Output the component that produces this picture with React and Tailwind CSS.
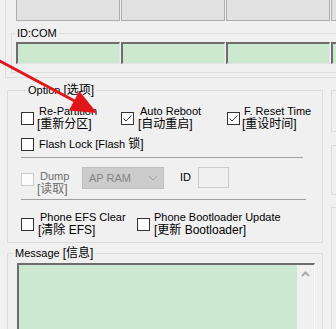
import React from 'react';

const Check = ({ checked = false, disabled = false }) => (
  <span
    className={`flex h-[13px] w-[13px] shrink-0 items-center justify-center border ${
      disabled ? 'border-[#cccccc] bg-[#fcfcfc]' : 'border-[#333333] bg-white'
    }`}
  >
    {checked && (
      <svg width="11" height="11" viewBox="0 0 11 11">
        <path d="M1.5 5.5 L4 8 L9.5 2.5" fill="none" stroke="#333333" strokeWidth="1" />
      </svg>
    )}
  </span>
);

// two-line checkbox caption: english on top, chinese below
const Caption = ({ top, bottom, gray = false, pad = 'pl-[2px]' }) => (
  <div className={`flex flex-col leading-[13px] ${gray ? 'text-[#6d6d6d]' : 'text-black'}`}>
    <span className={`whitespace-nowrap text-[11px] ${pad}`}>{top}</span>
    <span className="whitespace-nowrap text-[12px]">{bottom}</span>
  </div>
);

const Legend = ({ children, ml = 'ml-[5px]' }) => (
  <legend className={`${ml} px-[2px] text-[11px] leading-[13px] whitespace-nowrap`}>{children}</legend>
);

export default function App() {
  return (
    <div className="relative h-[329px] w-[336px] overflow-hidden bg-[#f0f0f0] font-['Liberation_Sans','Noto_Sans_CJK_SC',sans-serif] text-black">
      {/* top frame: buttons + ID:COM */}
      <div className="ml-[5px] w-[420px] border-b border-l border-[#dcdcdc] pb-[4px]">
        <div className="-mt-[2px] flex gap-[1px] pl-[10px]">
          {[0, 1, 2, 3].map((i) => (
            <div key={i} className="h-[23px] w-[104px] shrink-0 border border-[#adadad] bg-[#e1e1e1]" />
          ))}
        </div>
        <fieldset className="ml-[5px] mt-[6px] border border-[#dcdcdc] pb-[8px]">
          <Legend ml="ml-[3px]">ID:COM</Legend>
          <div className="mt-[2px] flex gap-[1px] pl-[4px]">
            {[0, 1, 2, 3].map((i) => (
              <div
                key={i}
                className="h-[22px] w-[104px] shrink-0 border-b border-l-2 border-r border-t-2 border-b-[#e3e3e3] border-l-[#6d6d6d] border-r-[#e3e3e3] border-t-[#6d6d6d] bg-[#cce8cf]"
              />
            ))}
          </div>
        </fieldset>
      </div>

      <div className="flex">
        <div className="ml-[7px] flex w-[316px] shrink-0 flex-col">
          {/* Option */}
          <fieldset className="mt-[6px] border border-[#dcdcdc] pb-[5px] pl-[13px]">
            <Legend>
              Option <span className="text-[12px]">[选项]</span>
            </Legend>

            <div className="mt-[8px] flex items-center">
              <div className="flex w-[100px] items-center gap-[3px]">
                <Check />
                <Caption top="Re-Partition" bottom="[重新分区]" />
              </div>
              <div className="flex w-[106px] items-center gap-[4px]">
                <Check checked />
                <Caption top="Auto Reboot" bottom="[自动重启]" />
              </div>
              <div className="flex items-center gap-[2px]">
                <Check checked />
                <Caption top="F. Reset Time" bottom="[重设时间]" />
              </div>
            </div>

            <div className="mt-[7px] flex h-[13px] items-center gap-[5px]">
              <Check />
              <span className="whitespace-nowrap text-[11px] leading-[13px]">
                Flash Lock [Flash <span className="text-[12px]">锁]</span>
              </span>
            </div>

            <div className="mt-[6px] h-px w-[282px] bg-[#a0a0a0]" />

            <div className="mt-[9px] flex h-[29px] items-start">
              <div className="flex w-[61px] items-start gap-[3px]">
                <span className="mt-[6px]">
                  <Check disabled />
                </span>
                <div className="mt-[3px]">
                  <Caption top="Dump" bottom="[读取]" gray pad="pl-[3px]" />
                </div>
              </div>
              <div className="flex h-[22px] w-[82px] items-center justify-between border border-[#bfbfbf] bg-[#cccccc] pl-[6px] pr-[5px]">
                <span className="text-[11px] text-[#838383]">AP RAM</span>
                <svg width="10" height="6" viewBox="0 0 10 6">
                  <path d="M1 1 L5 5 L9 1" fill="none" stroke="#a5a5a5" strokeWidth="1" />
                </svg>
              </div>
              <span className="ml-[16px] mt-[4px] w-[18px] text-[11px] leading-[13px]">ID</span>
              <div className="h-[21px] w-[31px] border border-[#cccccc] bg-[#f0f0f0]" />
            </div>

            <div className="mt-[3px] h-px w-[285px] bg-[#a0a0a0]" />

            <div className="mt-[11px] flex items-center">
              <div className="flex w-[116px] items-center gap-[4px]">
                <Check />
                <Caption top="Phone EFS Clear" bottom="[清除 EFS]" />
              </div>
              <div className="flex items-center gap-[4px]">
                <Check />
                <Caption top="Phone Bootloader Update" bottom="[更新 Bootloader]" pad="pl-0" />
              </div>
            </div>
          </fieldset>

          {/* Message */}
          <fieldset className="mt-[4px] border border-[#dcdcdc]">
            <Legend>
              Message <span className="text-[12px]">[信息]</span>
            </Legend>
            <div className="ml-[9px] mt-[3px] flex h-[80px] w-[298px] border-l-2 border-r border-t-2 border-l-[#6d6d6d] border-r-white border-t-[#6d6d6d]">
              <div className="flex-1 bg-[#cde8d0]" />
              <div className="flex w-[17px] justify-center bg-[#f0f0f0] pt-[6px]">
                <svg width="9" height="6" viewBox="0 0 9 6">
                  <path d="M1 5 L4.5 1.5 L8 5" fill="none" stroke="#a8a8a8" strokeWidth="2" />
                </svg>
              </div>
            </div>
          </fieldset>
        </div>

        {/* right column, mostly cut off */}
        <div className="ml-[8px] flex flex-col">
          <div className="mt-[12px] h-[42px] w-[20px] border-b border-l border-t border-[#dcdcdc]" />
          <div className="mt-[13px] h-[50px] w-[20px] border-b border-l border-t border-[#dcdcdc]" />
          <div className="mt-[12px] h-[200px] w-[20px] border-l border-t border-[#dcdcdc]" />
        </div>
      </div>

      {/* red annotation arrow */}
      <svg className="pointer-events-none absolute left-0 top-0" width="336" height="329" viewBox="0 0 336 329">
        <line x1="-4" y1="59" x2="76" y2="101.7" stroke="#e0161b" strokeWidth="3" />
        <polygon points="97,113 68.9,110.4 79.3,91" fill="#e0161b" />
      </svg>
    </div>
  );
}
